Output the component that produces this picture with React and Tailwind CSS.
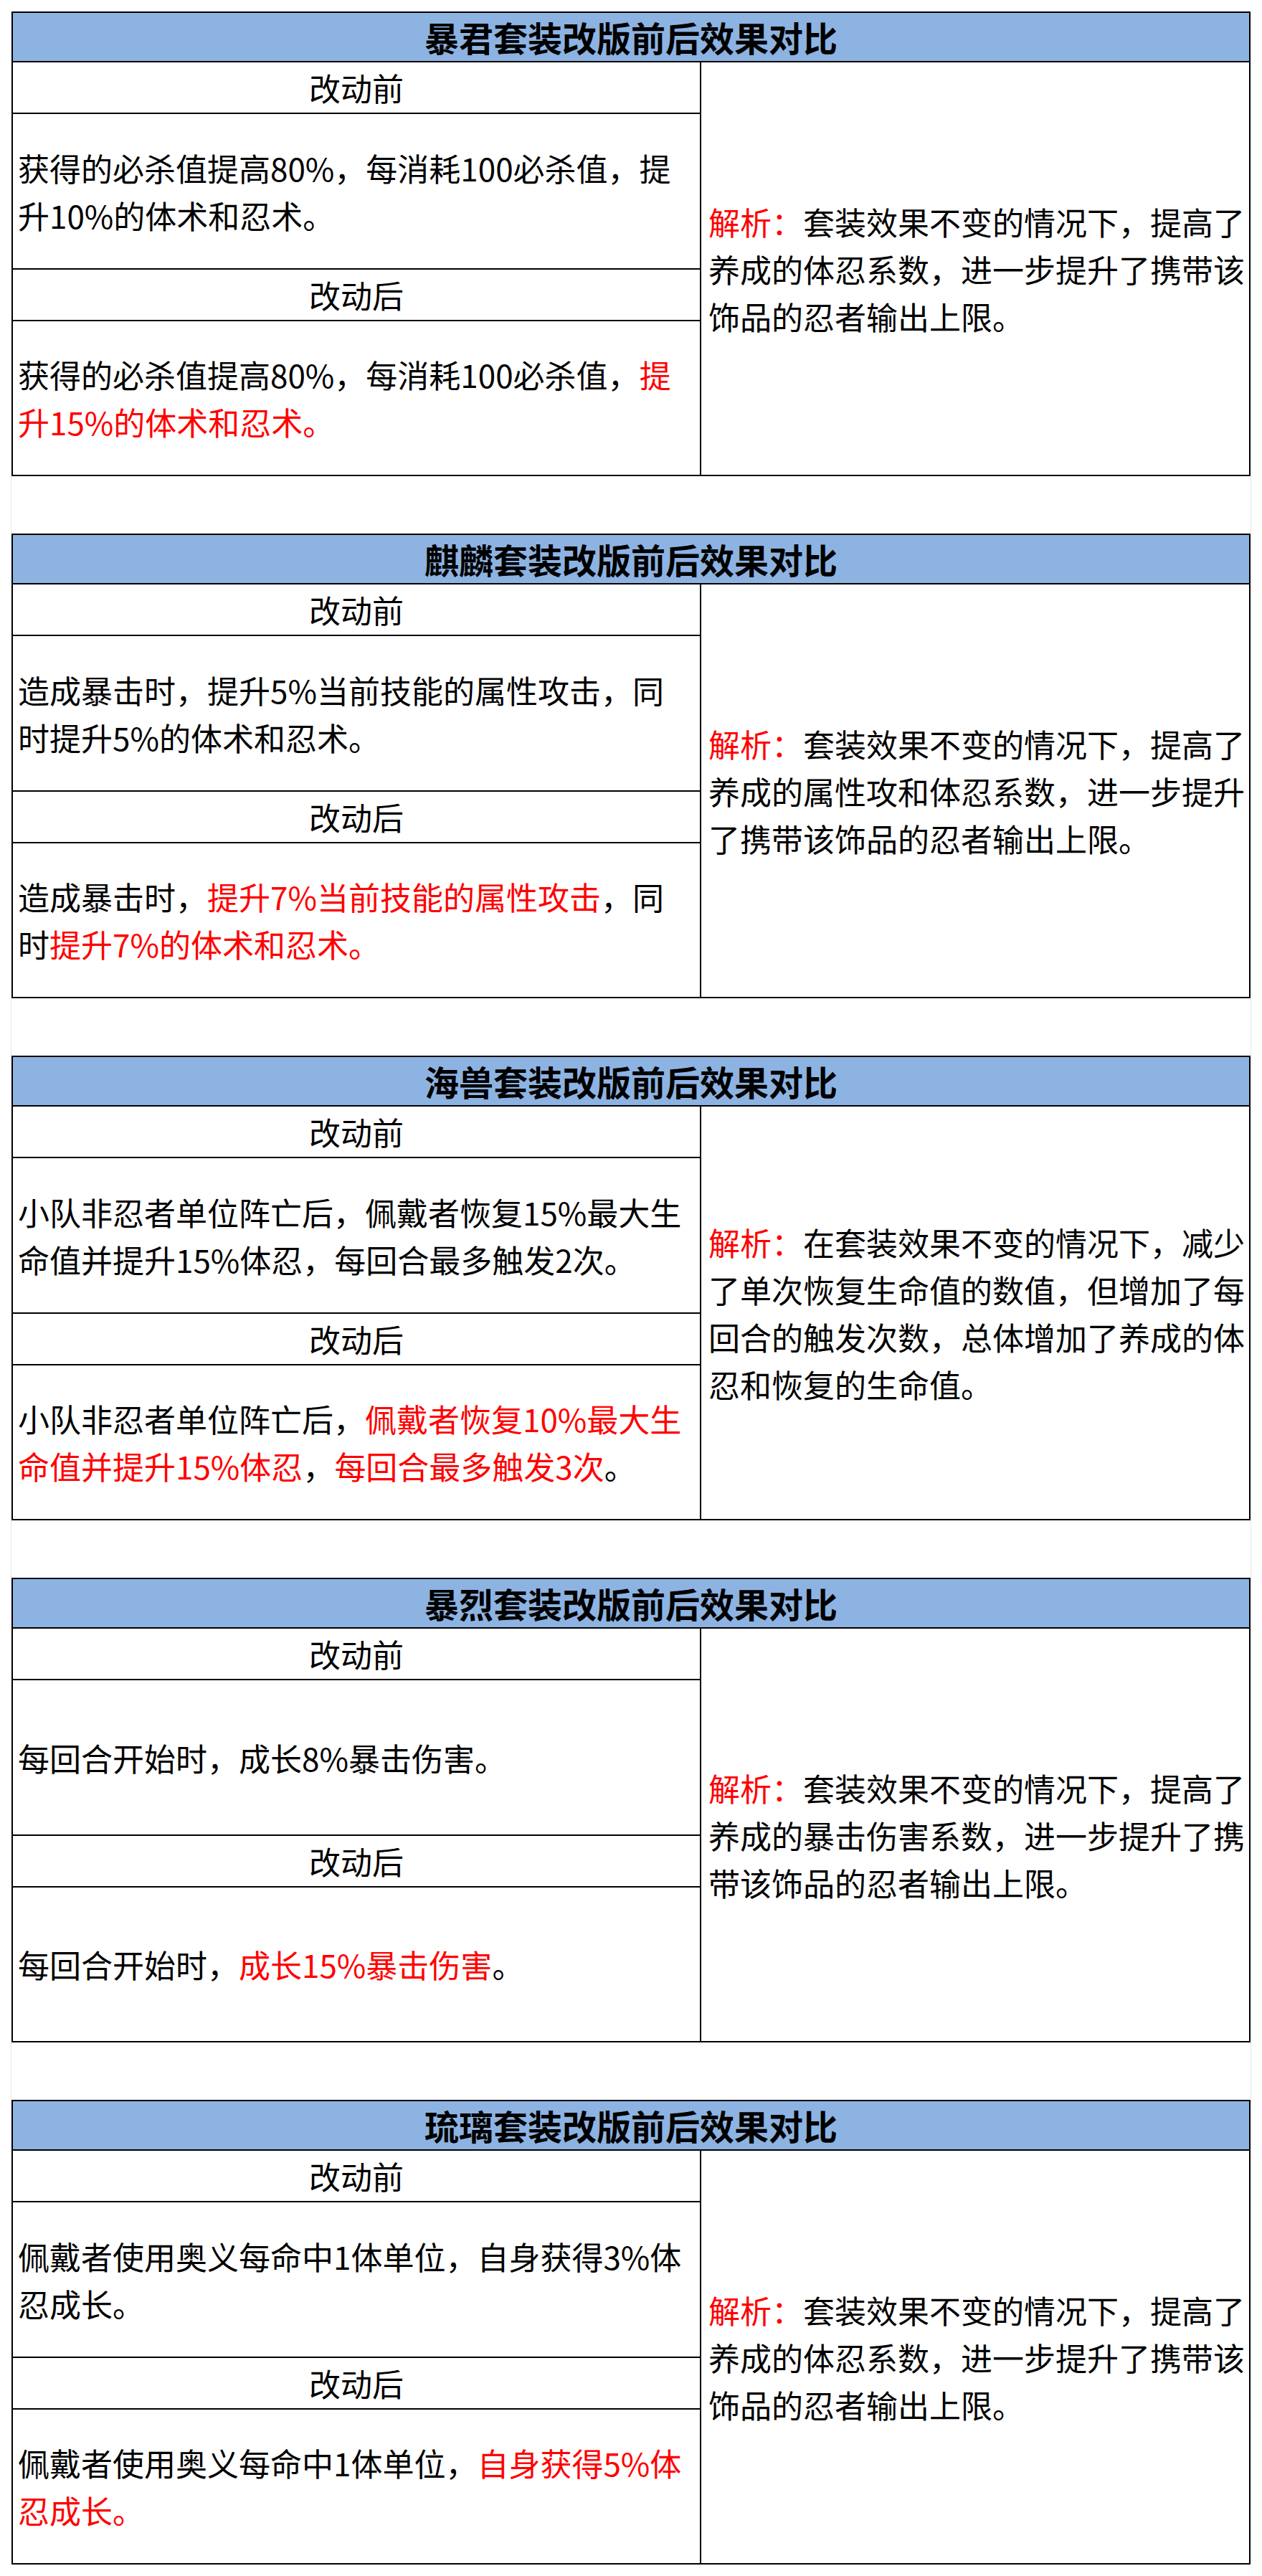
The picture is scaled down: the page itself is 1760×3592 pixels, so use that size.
const R = true

const sets = [
  {
    title: '暴君套装改版前后效果对比',
    before: [[['获得的必杀值提高80%，每消耗100必杀值，提']], [['升10%的体术和忍术。']]],
    after: [
      [['获得的必杀值提高80%，每消耗100必杀值，'], ['提', R]],
      [['升15%的体术和忍术。', R]],
    ],
    note: ['套装效果不变的情况下，提高了', '养成的体忍系数，进一步提升了携带该', '饰品的忍者输出上限。'],
  },
  {
    title: '麒麟套装改版前后效果对比',
    before: [[['造成暴击时，提升5%当前技能的属性攻击，同']], [['时提升5%的体术和忍术。']]],
    after: [
      [['造成暴击时，'], ['提升7%当前技能的属性攻击', R], ['，同']],
      [['时'], ['提升7%的体术和忍术。', R]],
    ],
    note: ['套装效果不变的情况下，提高了', '养成的属性攻和体忍系数，进一步提升', '了携带该饰品的忍者输出上限。'],
  },
  {
    title: '海兽套装改版前后效果对比',
    before: [[['小队非忍者单位阵亡后，佩戴者恢复15%最大生']], [['命值并提升15%体忍，每回合最多触发2次。']]],
    after: [
      [['小队非忍者单位阵亡后，'], ['佩戴者恢复10%最大生', R]],
      [['命值并提升15%体忍', R], ['，'], ['每回合最多触发3次', R], ['。']],
    ],
    note: ['在套装效果不变的情况下，减少', '了单次恢复生命值的数值，但增加了每', '回合的触发次数，总体增加了养成的体', '忍和恢复的生命值。'],
  },
  {
    title: '暴烈套装改版前后效果对比',
    before: [[['每回合开始时，成长8%暴击伤害。']]],
    after: [[['每回合开始时，'], ['成长15%暴击伤害', R], ['。']]],
    note: ['套装效果不变的情况下，提高了', '养成的暴击伤害系数，进一步提升了携', '带该饰品的忍者输出上限。'],
  },
  {
    title: '琉璃套装改版前后效果对比',
    before: [[['佩戴者使用奥义每命中1体单位，自身获得3%体']], [['忍成长。']]],
    after: [
      [['佩戴者使用奥义每命中1体单位，'], ['自身获得5%体', R]],
      [['忍成长。', R]],
    ],
    note: ['套装效果不变的情况下，提高了', '养成的体忍系数，进一步提升了携带该', '饰品的忍者输出上限。'],
  },
]

function Lines({ lines }) {
  return (
    <div className="leading-[66px] whitespace-nowrap">
      {lines.map((segs, i) => (
        <div key={i}>
          {segs.map(([t, red], j) => (
            <span key={j} className={red ? 'text-[#ff0000]' : ''}>{t}</span>
          ))}
        </div>
      ))}
    </div>
  )
}

function CompareTable({ set }) {
  return (
    <div className="w-[1728px] h-[648px] border-2 border-black flex flex-col">
      <div className="h-[69px] shrink-0 bg-[#8db3e2] border-b-2 border-black flex items-center justify-center text-[48px] font-bold leading-none pb-[2px]">
        {set.title}
      </div>
      <div className="flex flex-1 min-h-0">
        <div className="w-[960px] shrink-0 border-r-2 border-black flex flex-col">
          <div className="h-[72px] shrink-0 border-b-2 border-black flex items-center justify-center">改动前</div>
          <div className="h-[217px] shrink-0 border-b-2 border-black flex items-center pl-[7px]">
            <Lines lines={set.before} />
          </div>
          <div className="h-[72px] shrink-0 border-b-2 border-black flex items-center justify-center">改动后</div>
          <div className="flex-1 flex items-center pl-[7px]">
            <Lines lines={set.after} />
          </div>
        </div>
        <div className="flex-1 flex items-center pl-[10px]">
          <div className="leading-[66px] whitespace-nowrap">
            {set.note.map((l, i) => (
              <div key={i}>
                {i === 0 && <span className="text-[#ff0000]">解析：</span>}
                {l}
              </div>
            ))}
          </div>
        </div>
      </div>
    </div>
  )
}

export default function App() {
  return (
    <div
      className="w-[1760px] h-[3592px] bg-white px-4 py-4 text-black text-[44px]"
      style={{ fontFamily: '"Noto Sans CJK SC", "Noto Sans", sans-serif' }}
    >
      {sets.map((s, i) => (
        <div key={s.title}>
          {i > 0 && <div className="h-[80px] w-[1730px] -ml-px border-x border-[#e6e6e6]" />}
          <CompareTable set={s} />
        </div>
      ))}
    </div>
  )
}
